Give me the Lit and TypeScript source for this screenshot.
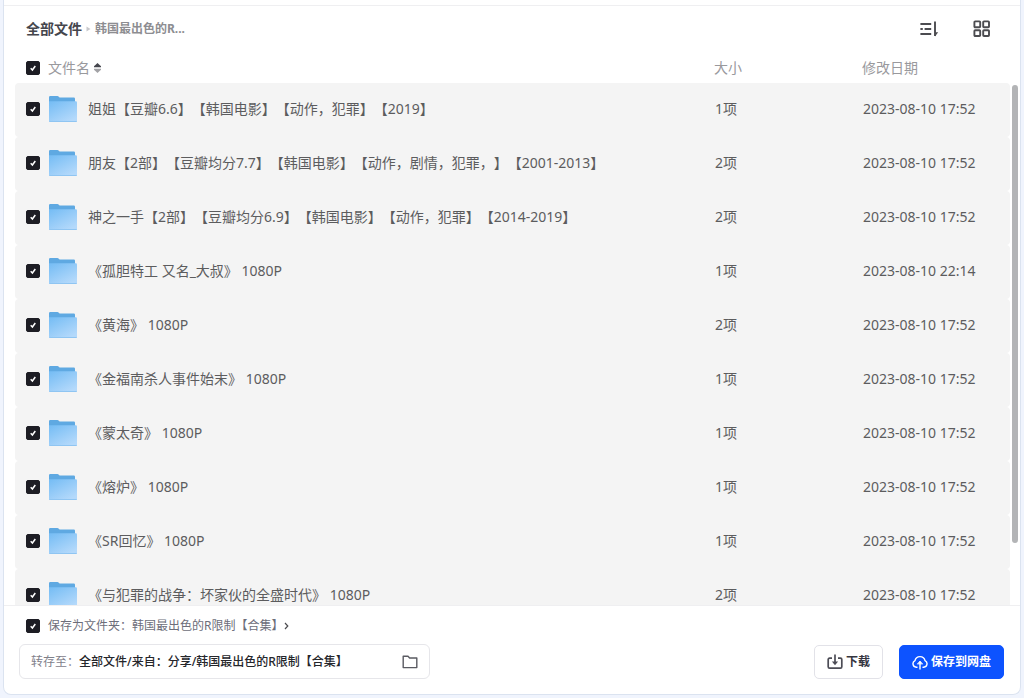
import { LitElement, html, css } from "lit";
import { customElement, state } from "lit/decorators.js";

interface FileItem {
  name: string;
  size: string;
  date: string;
}

const FILES: FileItem[] = [
  { name: "姐姐【豆瓣6.6】【韩国电影】【动作，犯罪】【2019】", size: "1项", date: "2023-08-10 17:52" },
  { name: "朋友【2部】【豆瓣均分7.7】【韩国电影】【动作，剧情，犯罪，】【2001-2013】", size: "2项", date: "2023-08-10 17:52" },
  { name: "神之一手【2部】【豆瓣均分6.9】【韩国电影】【动作，犯罪】【2014-2019】", size: "2项", date: "2023-08-10 17:52" },
  { name: "《孤胆特工 又名_大叔》 1080P", size: "1项", date: "2023-08-10 22:14" },
  { name: "《黄海》 1080P", size: "2项", date: "2023-08-10 17:52" },
  { name: "《金福南杀人事件始末》 1080P", size: "1项", date: "2023-08-10 17:52" },
  { name: "《蒙太奇》 1080P", size: "1项", date: "2023-08-10 17:52" },
  { name: "《熔炉》 1080P", size: "1项", date: "2023-08-10 17:52" },
  { name: "《SR回忆》 1080P", size: "1项", date: "2023-08-10 17:52" },
  { name: "《与犯罪的战争：坏家伙的全盛时代》 1080P", size: "2项", date: "2023-08-10 17:52" },
];

const folderIcon = html`<svg class="folder" viewBox="0 0 28 28" aria-hidden="true">
  <defs>
    <linearGradient id="front" x1="0" y1="0" x2="0.7" y2="1">
      <stop offset="0" stop-color="#74bcf4" />
      <stop offset="1" stop-color="#b4d9fb" />
    </linearGradient>
  </defs>
  <path d="M0 2.2Q0 1 1.2 1H8.4Q9.2 1 9.8 1.8L10.6 2.6H24.8Q26 2.6 26 3.8V10H0Z" fill="#5fa9e2" />
  <path d="M0 6.2H26.8Q28 6.2 28 7.4V25.8Q28 27 26.8 27H1.2Q0 27 0 25.8Z" fill="url(#front)" />
  <path d="M0 26V26.2Q0 27 1.2 27H26.8Q28 27 28 26.2V26Z" fill="#8fc5f2" />
</svg>`;

@customElement("app-root")
export class AppRoot extends LitElement {
  @state() private selected = new Set<number>(FILES.map((_, i) => i));

  static styles = css`
    :host {
      display: block;
      font-family: "Noto Sans", "Noto Sans CJK SC", sans-serif;
      font-size: 14px;
      line-height: 20px;
      color: #5c5c5e;
      text-spacing-trim: space-all;
    }
    * {
      box-sizing: border-box;
    }
    button,
    input {
      font: inherit;
      color: inherit;
      margin: 0;
    }
    button {
      cursor: pointer;
    }
    .page {
      height: 100vh;
      padding: 0 3px 3px;
      background: #f0f4fd;
    }
    .card {
      height: 100%;
      display: flex;
      flex-direction: column;
      padding-top: 5px;
      background: #fff;
      border: 1px solid #dbe3f0;
      border-top: 0;
      border-radius: 0 0 8px 8px;
    }
    .toolbar {
      flex: none;
      display: flex;
      align-items: center;
      justify-content: space-between;
      height: 48px;
      padding: 0 28px 2px 22px;
      border-top: 1px solid #efeff1;
    }
    .crumbs {
      display: flex;
      align-items: center;
      gap: 4px;
      font-weight: 700;
    }
    .crumbs a {
      color: #45464d;
      text-decoration: none;
    }
    .crumbs svg {
      width: 5px;
      height: 6px;
    }
    .crumbs span {
      font-size: 12px;
      color: #8d8d91;
    }
    .tools {
      display: flex;
      gap: 32px;
    }
    .tool {
      display: flex;
      padding: 0;
      border: 0;
      background: none;
    }
    .tool svg {
      width: 20px;
      height: 20px;
    }
    .content {
      flex: 1;
      min-height: 0;
      display: flex;
      padding: 0 2px 0 11px;
    }
    .scroller {
      flex: 1;
      overflow-y: auto;
      scrollbar-width: none;
    }
    .track {
      flex: none;
      width: 6px;
      margin-left: 2px;
      padding-top: 32px;
    }
    .thumb {
      height: 88%;
      border-radius: 3px;
      background: #b3b4b6;
    }
    table {
      width: 100%;
      table-layout: fixed;
      border-collapse: separate;
      border-spacing: 0;
    }
    th,
    td {
      padding: 0;
      text-align: left;
      white-space: nowrap;
    }
    th {
      position: sticky;
      top: 0;
      z-index: 1;
      height: 30px;
      background: #fff;
      font-weight: 400;
      color: #99999d;
    }
    td {
      height: 54px;
      padding: 0 0 2px 1px;
      background: #f4f4f4;
    }
    td:first-child {
      padding-left: 0;
      border-radius: 4px 0 0 4px;
    }
    td:last-child {
      border-radius: 0 4px 4px 0;
    }
    .col {
      width: 148px;
    }
    .name {
      display: flex;
      align-items: center;
      gap: 11px;
      padding-left: 11px;
    }
    .check {
      display: flex;
      align-items: center;
      gap: 9px;
    }
    .name.check,
    .save-as .check {
      gap: 8px;
    }
    input[type="checkbox"] {
      appearance: none;
      flex: none;
      width: 14px;
      height: 14px;
      border: 1px solid #1d1d24;
      border-radius: 2px;
      background: #fff;
    }
    input[type="checkbox"]:checked {
      background: #1d1d24
        url("data:image/svg+xml,%3Csvg xmlns='http://www.w3.org/2000/svg' viewBox='0 0 12 12'%3E%3Cpath d='M3.7 6.3l1.7 1.7 2.9-4' fill='none' stroke='white' stroke-width='1.5'/%3E%3C/svg%3E")
        center / 12px 12px no-repeat;
    }
    .folder {
      display: block;
      flex: none;
      width: 28px;
      height: 28px;
    }
    .sort {
      display: flex;
      align-items: center;
      gap: 4px;
      padding: 0;
      border: 0;
      background: none;
    }
    .sort svg {
      width: 7px;
      height: 10px;
    }
    .footer {
      flex: none;
      padding: 0 16px 15px 15px;
      border-top: 1px solid #efeff1;
    }
    .save-as {
      display: flex;
      align-items: center;
      height: 38px;
      padding: 2px 0 0 7px;
      font-size: 12px;
      color: #6d6e7a;
    }
    .save-as svg {
      width: 5px;
      height: 8px;
      margin-left: 1px;
    }
    .actions {
      display: flex;
      align-items: center;
      gap: 16px;
      font-size: 12px;
    }
    .target {
      display: flex;
      align-items: center;
      flex: 0 1 411px;
      height: 35px;
      margin-right: auto;
      padding: 0 11px;
      border: 1px solid #e6e6ea;
      border-radius: 6px;
    }
    .target label {
      flex: none;
      color: #7f808a;
    }
    .target input {
      flex: 1;
      min-width: 0;
      padding: 0;
      border: 0;
      outline: 0;
      background: none;
      font-weight: 500;
      color: #25262b;
      text-spacing-trim: space-all;
    }
    .target button {
      display: flex;
      padding: 0;
      border: 0;
      background: none;
    }
    .target svg {
      width: 16px;
      height: 16px;
    }
    .btn {
      display: flex;
      align-items: center;
      justify-content: center;
      gap: 3px;
      height: 34px;
      padding: 0 12px;
      border: 1px solid #e2e2e8;
      border-radius: 5px;
      background: #fff;
      font-weight: 700;
      color: #35353f;
      white-space: nowrap;
    }
    .btn svg {
      width: 16px;
      height: 16px;
    }
    .primary {
      border-color: #0d53ff;
      background: #0d53ff;
      color: #fff;
    }
  `;

  private toggle(i: number) {
    const next = new Set(this.selected);
    next.has(i) ? next.delete(i) : next.add(i);
    this.selected = next;
  }

  private toggleAll(e: Event) {
    const on = (e.target as HTMLInputElement).checked;
    this.selected = new Set(on ? FILES.map((_, i) => i) : []);
  }

  private row(f: FileItem, i: number) {
    return html`<tr>
      <td>
        <div class="name">
          <span class="check">
            <input
              type="checkbox"
              id="file-${i}"
              .checked=${this.selected.has(i)}
              @change=${() => this.toggle(i)}
            />
            ${folderIcon}
          </span>
          <label for="file-${i}">${f.name}</label>
        </div>
      </td>
      <td>${f.size}</td>
      <td>${f.date}</td>
    </tr>`;
  }

  render() {
    return html`<div class="page">
      <main class="card">
        <header class="toolbar">
          <nav class="crumbs">
            <a href="#">全部文件</a>
            <svg viewBox="0 0 5 6"><path d="M.5 .5L4.5 3L.5 5.5Z" fill="#c8c8cc" /></svg>
            <span>韩国最出色的R...</span>
          </nav>
          <div class="tools">
            <button class="tool" aria-label="排序">
              <svg viewBox="0 0 20 20" fill="none" stroke="#4c4c50" stroke-width="1.9">
                <path d="M.4 5H11.2M.4 10H2.8M4.6 10H11.2M.4 15H11.2M15 2.4V17" />
                <path d="M15 17.6V13.2H18.2Z" fill="#4c4c50" stroke="none" />
              </svg>
            </button>
            <button class="tool" aria-label="网格视图">
              <svg viewBox="0 0 20 20" fill="none" stroke="#4c4c50" stroke-width="1.9">
                <rect x="2.4" y="2.4" width="5.8" height="5.8" rx="0.8" />
                <rect x="11.2" y="2.4" width="5.8" height="5.8" rx="0.8" />
                <rect x="2.4" y="11.2" width="5.8" height="5.8" rx="0.8" />
                <rect x="11.2" y="11.2" width="5.8" height="5.8" rx="0.8" />
              </svg>
            </button>
          </div>
        </header>

        <section class="content">
          <div class="scroller">
            <table>
              <colgroup>
                <col />
                <col class="col" />
                <col class="col" />
              </colgroup>
              <thead>
                <tr>
                  <th>
                    <div class="name check">
                      <input
                        type="checkbox"
                        aria-label="全选"
                        .checked=${this.selected.size === FILES.length}
                        @change=${this.toggleAll}
                      />
                      <button class="sort">
                        文件名
                        <svg viewBox="0 0 7 10">
                          <path d="M3.5 0L7 3.2V4.2H0V3.2Z" fill="#45464d" />
                          <path d="M3.5 10L7 6.8V5.8H0V6.8Z" fill="#a2a2a6" />
                        </svg>
                      </button>
                    </div>
                  </th>
                  <th>大小</th>
                  <th>修改日期</th>
                </tr>
              </thead>
              <tbody>
                ${FILES.map((f, i) => this.row(f, i))}
              </tbody>
            </table>
          </div>
          <div class="track"><div class="thumb"></div></div>
        </section>

        <footer class="footer">
          <div class="save-as">
            <span class="check">
              <input type="checkbox" id="save-as" checked />
              <label for="save-as">保存为文件夹：韩国最出色的R限制【合集】</label>
            </span>
            <svg viewBox="0 0 5 8" fill="none" stroke="#4c4c50" stroke-width="1.2">
              <path d="M1 1L3.8 4L1 7" />
            </svg>
          </div>
          <div class="actions">
            <div class="target">
              <label for="target">转存至：</label>
              <input id="target" type="text" readonly value="全部文件/来自：分享/韩国最出色的R限制【合集】" />
              <button aria-label="选择文件夹">
                <svg viewBox="0 0 16 16" fill="none" stroke="#5a5b62" stroke-width="1.4" stroke-linejoin="round">
                  <path d="M1.2 2.2H6L7.6 4H14.8V13.6H1.2Z" />
                </svg>
              </button>
            </div>
            <button class="btn">
              <svg viewBox="0 0 16 16" fill="none" stroke="#4c4c55" stroke-width="1.7">
                <path d="M5 4.2H2.6Q1.2 4.2 1.2 5.6V12.8Q1.2 14.2 2.6 14.2H13.4Q14.8 14.2 14.8 12.8V5.6Q14.8 4.2 13.4 4.2H11" />
                <path d="M8 .6V9" />
                <path d="M4.9 7.6H11.1L8 11.2Z" fill="#4c4c55" stroke="none" />
              </svg>
              下载
            </button>
            <button class="btn primary">
              <svg viewBox="0 0 16 16" fill="none" stroke="#fff" stroke-width="1.4" stroke-linecap="round" stroke-linejoin="round">
                <path d="M5 13.2H4.2A3.4 3.4 0 0 1 3 6.7A5.1 5.1 0 0 1 13 6.7A3.4 3.4 0 0 1 11.8 13.2H11" />
                <path d="M8 15V8" />
                <path d="M5.4 9.8L8 7L10.6 9.8Z" fill="#fff" stroke-width="0.6" />
              </svg>
              保存到网盘
            </button>
          </div>
        </footer>
      </main>
    </div>`;
  }
}
